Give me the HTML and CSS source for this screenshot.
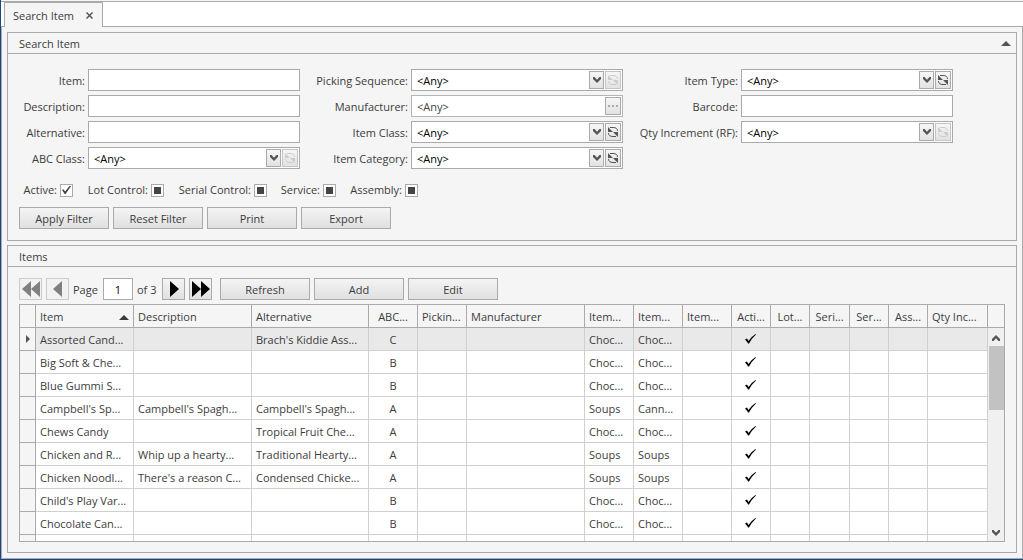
FILE: index.html
```html
<!DOCTYPE html>
<html lang="en">
<head>
<meta charset="utf-8">
<meta name="viewport" content="width=device-width, initial-scale=1">
<title>Search Item</title>
<link rel="stylesheet" href="styles.css">
</head>
<body>
<svg class="defs" aria-hidden="true">
  <symbol id="i-down" viewBox="0 0 8 6"><path d="M0 0h1.500L4 2.800 6.500 0H8v2L4 6 0 2z"/></symbol>
  <symbol id="i-up" viewBox="0 0 8 6"><path d="M0 6h1.500L4 3.200 6.500 6H8V4L4 0 0 4z"/></symbol>
  <symbol id="i-sync" viewBox="0 0 12 12"><path d="M1 1v5h5zM11 11V6H6z"/><path d="M3 1.500h3Q10.500 1.500 10.500 5M9 10.500H6Q1.500 10.500 1.500 7" fill="none" stroke="currentColor"/></symbol>
  <symbol id="i-tick" viewBox="0 0 12 12"><path d="M0 6.500L2 5.500 3.500 8Q6.500 3.500 10.500 1L11 1.500Q7 5 4 10.500H3Q2 8.500 0 6.500z"/></symbol>
  <symbol id="i-tri" viewBox="0 0 10 5"><path d="M0 5L5 0l5 5z"/></symbol>
</svg>
<div class="window">
  <nav class="tabs" role="tablist">
    <div class="tab" role="tab" aria-selected="true">Search Item
      <button class="close" aria-label="Close"><svg width="7" height="7" viewBox="0 0 7 7"><path d="M.5.5l6 6M6.500.5l-6 6" fill="none" stroke="#555" stroke-width="1.500"/></svg></button>
    </div>
  </nav>
  <main class="page">
    <section class="panel">
      <header class="panel-head"><h2>Search Item</h2><button class="collapse" aria-label="Collapse"><svg width="10" height="5"><use href="#i-tri"/></svg></button></header>
      <form class="filters">
        <div class="fields">
          <div class="group">
            <label for="item">Item:</label><input class="box" id="item" type="text">
            <label for="desc">Description:</label><input class="box" id="desc" type="text">
            <label for="alt">Alternative:</label><input class="box" id="alt" type="text">
            <label for="abc">ABC Class:</label><div class="box combo"><select id="abc"><option>&lt;Any&gt;</option></select><span class="mini drop"><svg width="8" height="6"><use href="#i-down"/></svg></span><button type="button" class="mini" disabled aria-label="Reload"><svg width="12" height="12"><use href="#i-sync"/></svg></button></div>
          </div>
          <div class="group second">
            <label for="pick">Picking Sequence:</label><div class="box combo"><select id="pick"><option>&lt;Any&gt;</option></select><span class="mini drop"><svg width="8" height="6"><use href="#i-down"/></svg></span><button type="button" class="mini" disabled aria-label="Reload"><svg width="12" height="12"><use href="#i-sync"/></svg></button></div>
            <label for="manu">Manufacturer:</label><div class="box combo muted"><input id="manu" type="text" value="&lt;Any&gt;" readonly><button type="button" class="mini" disabled aria-label="Browse"><svg width="10" height="2"><path d="M0 0h2v2H0zM4 0h2v2H4zM8 0h2v2H8z"/></svg></button></div>
            <label for="class">Item Class:</label><div class="box combo"><select id="class"><option>&lt;Any&gt;</option></select><span class="mini drop"><svg width="8" height="6"><use href="#i-down"/></svg></span><button type="button" class="mini" aria-label="Reload"><svg width="12" height="12"><use href="#i-sync"/></svg></button></div>
            <label for="cat">Item Category:</label><div class="box combo"><select id="cat"><option>&lt;Any&gt;</option></select><span class="mini drop"><svg width="8" height="6"><use href="#i-down"/></svg></span><button type="button" class="mini" aria-label="Reload"><svg width="12" height="12"><use href="#i-sync"/></svg></button></div>
          </div>
          <div class="group third">
            <label for="type">Item Type:</label><div class="box combo"><select id="type"><option>&lt;Any&gt;</option></select><span class="mini drop"><svg width="8" height="6"><use href="#i-down"/></svg></span><button type="button" class="mini" aria-label="Reload"><svg width="12" height="12"><use href="#i-sync"/></svg></button></div>
            <label for="bar">Barcode:</label><input class="box" id="bar" type="text">
            <label for="qty">Qty Increment (RF):</label><div class="box combo"><select id="qty"><option>&lt;Any&gt;</option></select><span class="mini drop"><svg width="8" height="6"><use href="#i-down"/></svg></span><button type="button" class="mini" disabled aria-label="Reload"><svg width="12" height="12"><use href="#i-sync"/></svg></button></div>
          </div>
        </div>
        <div class="checks">
          <label>Active:<input type="checkbox" class="ticked" checked></label>
          <label>Lot Control:<input type="checkbox" class="mixed"></label>
          <label>Serial Control:<input type="checkbox" class="mixed"></label>
          <label>Service:<input type="checkbox" class="mixed"></label>
          <label>Assembly:<input type="checkbox" class="mixed"></label>
        </div>
        <div class="actions">
          <button type="button" class="btn">Apply Filter</button>
          <button type="button" class="btn">Reset Filter</button>
          <button type="button" class="btn">Print</button>
          <button type="button" class="btn">Export</button>
        </div>
      </form>
    </section>
    <section class="panel items">
      <header class="panel-head"><h2>Items</h2></header>
      <div class="list">
        <div class="pager">
          <button class="nav" disabled aria-label="First page"><svg width="18" height="16" viewBox="0 0 18 16"><path d="M9 0v16L0 8zM18 0v16L9 8z"/></svg></button>
          <button class="nav" disabled aria-label="Previous page"><svg width="18" height="16" viewBox="0 0 18 16"><path d="M13 0v16L4 8z"/></svg></button>
          <label for="pageno">Page</label><input id="pageno" class="pageno" type="text" value="1"><span class="total">of 3</span>
          <button class="nav" aria-label="Next page"><svg width="18" height="16" viewBox="0 0 18 16"><path d="M5 0v16l9-8z"/></svg></button>
          <button class="nav" aria-label="Last page"><svg width="18" height="16" viewBox="0 0 18 16"><path d="M0 0v16l9-8zM9 0v16l9-8z"/></svg></button>
          <div class="actions main-actions">
            <button class="btn">Refresh</button>
            <button class="btn">Add</button>
            <button class="btn">Edit</button>
          </div>
        </div>
        <div class="grid">
          <table>
            <colgroup><col class="w16"><col class="w98"><col class="w118"><col class="w117"><col class="w49"><col class="w49"><col><col class="w49"><col class="w49"><col class="w49"><col class="w39"><col class="w39"><col class="w40"><col class="w39"><col class="w39"><col class="w60"><col class="w16"></colgroup>
            <thead>
              <tr><th></th><th><span class="sorted">Item<svg width="10" height="5"><use href="#i-tri"/></svg></span></th><th>Description</th><th>Alternative</th><th class="mid">ABC...</th><th>Pickin...</th><th>Manufacturer</th><th>Item...</th><th>Item...</th><th>Item...</th><th class="mid">Acti...</th><th class="mid">Lot...</th><th class="mid">Seri...</th><th class="mid">Ser...</th><th class="mid">Ass...</th><th>Qty Inc...</th><th></th></tr>
            </thead>
            <tbody id="rows"></tbody>
          </table>
          <div class="scroll" aria-hidden="true"><svg width="8" height="6"><use href="#i-up"/></svg><div class="thumb"></div><svg class="end" width="8" height="6"><use href="#i-down"/></svg></div>
        </div>
      </div>
    </section>
  </main>
</div>
<script src="rows.js"></script>
</body>
</html>
```
FILE: rows.js
```js
const items = [
  ["Assorted Cand...", "", "Brach's Kiddie Ass...", "C", "Choc...", "Choc..."],
  ["Big Soft & Che...", "", "", "B", "Choc...", "Choc..."],
  ["Blue Gummi S...", "", "", "B", "Choc...", "Choc..."],
  ["Campbell's Sp...", "Campbell's Spagh...", "Campbell's Spagh...", "A", "Soups", "Cann..."],
  ["Chews Candy", "", "Tropical Fruit Che...", "A", "Choc...", "Choc..."],
  ["Chicken and R...", "Whip up a hearty...", "Traditional Hearty...", "A", "Soups", "Soups"],
  ["Chicken Noodl...", "There's a reason C...", "Condensed Chicke...", "A", "Soups", "Soups"],
  ["Child's Play Var...", "", "", "B", "Choc...", "Choc..."],
  ["Chocolate Can...", "", "", "B", "Choc...", "Choc..."],
  null
];
const tick = '<svg width="12" height="12" role="img" aria-label="Yes"><use href="#i-tick"/></svg>';
const body = document.getElementById("rows");
items.forEach((item, index) => {
  const row = body.insertRow();
  const add = (html, cls) => {
    const cell = row.insertCell();
    cell.innerHTML = html;
    if (cls) cell.className = cls;
  };
  const [name, description, alternative, abc, group, category] = item || ["", "", "", "", "", ""];
  if (index === 0) row.className = "selected";
  add(index === 0 ? '<svg width="4" height="8"><path d="M0 0v8l4-4z"/></svg>' : "", "handle");
  add(name.replace("&", "&amp;"));
  add(description);
  add(alternative);
  add(abc, "mid");
  add("");
  add("");
  add(group);
  add(category);
  add("");
  add(item ? tick : "", "tick");
  for (let i = 0; i < 6; i++) add("");
});
```
FILE: styles.css
```css
* { box-sizing: border-box; }
body {
  margin: 0;
  color: #3c3c3c;
  background: #f5f5f5;
  font: 11px/16px "Open Sans", "Noto Sans", sans-serif;
}
button, input, select { font: inherit; color: inherit; border-radius: 0; margin: 0; }
svg { display: block; fill: currentColor; flex: none; }
h2 { margin: 0; font: inherit; }
.defs { position: absolute; width: 0; height: 0; }

.window {
  display: flex;
  flex-direction: column;
  height: 100vh;
  border-left: 1px solid #1c4587;
  border-bottom: 1px solid #1c4587;
}
.tabs {
  display: flex;
  flex: none;
  height: 26px;
  margin-top: 1px;
  padding-left: 3px;
  background: #fff;
  border-top: 1px solid #aaa;
  border-bottom: 1px solid #aaa;
}
.tab {
  display: flex;
  align-items: center;
  justify-content: space-between;
  width: 99px;
  height: 25px;
  padding: 1px 9px 0 8px;
  background: #f5f5f5;
  border: 1px solid #aaa;
  border-width: 1px 1px 0;
}
.close, .collapse { padding: 0; border: 0; background: none; color: #555; }
.page {
  display: flex;
  flex: 1;
  flex-direction: column;
  gap: 4px;
  min-height: 0;
  padding: 5px;
  border: 1px solid #aaa;
  border-top: 0;
}
.panel { flex: none; border: 1px solid #aaa; }
.panel-head {
  display: flex;
  align-items: center;
  justify-content: space-between;
  height: 21px;
  padding: 1px 5px 0 11px;
  border-bottom: 1px solid #aaa;
}
.filters { padding: 15px 11px 11px; }
.fields { display: flex; }
.group {
  display: grid;
  grid-template-columns: 66px 212px;
  grid-auto-rows: 22px;
  align-content: start;
  align-items: center;
  gap: 4px 3px;
}
.second { grid-template-columns: 108px 212px; }
.third { grid-template-columns: 115px 212px; }
.group label { padding-top: 2px; text-align: right; white-space: nowrap; }
.box {
  width: 100%;
  height: 22px;
  padding: 0 5px;
  background: #fff;
  border: 1px solid #aaa;
}
.combo { display: flex; align-items: center; gap: 1px; padding: 1px; color: #000; }
.combo select, .combo input {
  flex: 1;
  min-width: 0;
  height: 18px;
  padding: 1px 0 0 4px;
  border: 0;
  background: none;
  appearance: none;
}
.muted { color: #444; border-color: #b5b5b5; }
.mini {
  display: grid;
  place-items: center;
  width: 16px;
  height: 18px;
  padding: 0;
  color: #555;
  background: linear-gradient(#f6f6f6, #e2e2e2);
  border: 1px solid #aaa;
}
.drop { width: 15px; pointer-events: none; }
.mini:disabled { color: #ccc; border-color: #c4c4c4; }
.muted .mini:disabled { color: #aaa; border-color: #aaa; }

.checks {
  display: grid;
  grid-template-columns: 54px 91px 103px 69px 82px;
  padding-top: 13px;
}
.checks label { display: flex; align-items: center; justify-content: flex-end; gap: 3px; white-space: nowrap; }
.checks input {
  appearance: none;
  width: 13px;
  height: 13px;
  background: #fff;
  border: 1px solid #aaa;
}
.ticked::before {
  content: "";
  display: block;
  width: 9px;
  height: 9px;
  margin: 1px;
  background: #444;
  clip-path: polygon(0 50%, 15% 42%, 35% 68%, 88% 0, 100% 8%, 40% 95%, 30% 95%);
}
.mixed { padding: 2px; }
.mixed::before { content: ""; display: block; width: 7px; height: 7px; background: #444; }
.actions { display: flex; gap: 4px; padding-top: 9px; }
.btn {
  width: 90px;
  height: 22px;
  padding: 1px 0 0;
  background: linear-gradient(#f4f4f4, #e0e0e0);
  border: 1px solid #aaa;
}

.items { display: flex; flex: 1; flex-direction: column; min-height: 0; }
.list { display: flex; flex: 1; flex-direction: column; gap: 4px; min-height: 0; padding: 11px 11px 10px; }
.pager { display: flex; align-items: center; gap: 4px; height: 22px; }
.pager label { width: 26px; padding-top: 1px; }
.total { width: 21px; padding-top: 1px; white-space: nowrap; }
.nav {
  display: grid;
  place-items: center;
  width: 23px;
  height: 22px;
  padding: 0;
  color: #000;
  background: linear-gradient(#f4f4f4, #e0e0e0);
  border: 1px solid #aaa;
}
.nav:disabled { color: #808080; background: #f2f2f2; border-color: #ccc; }
.pageno {
  width: 30px;
  height: 22px;
  padding: 0;
  text-align: center;
  color: #000;
  background: #fff;
  border: 1px solid #aaa;
}
.main-actions { padding: 0 0 0 4px; }

.grid { position: relative; flex: 1; min-height: 0; overflow: hidden; border: 1px solid #aaa; background: #fff; }
table { width: 100%; table-layout: fixed; border-spacing: 0; }
.w16 { width: 16px; }
.w39 { width: 39px; }
.w40 { width: 40px; }
.w49 { width: 49px; }
.w60 { width: 60px; }
.w98 { width: 98px; }
.w117 { width: 117px; }
.w118 { width: 118px; }
th, td {
  height: 23px;
  padding: 2px 0 0 4px;
  overflow: hidden;
  text-align: left;
  font-weight: normal;
  line-height: 16px;
  white-space: nowrap;
  border-right: 1px solid #d0d0d0;
  border-bottom: 1px solid #d0d0d0;
}
th { background: #f5f5f5; border-color: #aaa; }
th:last-child { border-right: 0; }
.mid { padding-left: 0; text-align: center; }
.handle { padding: 0 0 0 6px; color: #555; background: #f5f5f5; border-color: #aaa; }
.selected td:not(.handle) { background: #e9e9e9; }
.sorted { display: flex; align-items: center; justify-content: space-between; padding-right: 4px; }
.tick { padding: 0; color: #000; }
.tick svg { margin: 0 auto; }
.scroll {
  position: absolute;
  inset: 23px 0 0 auto;
  display: flex;
  flex-direction: column;
  align-items: center;
  gap: 5px;
  width: 16px;
  padding: 7px 0 5px;
  background: #f0f0f0;
  color: #555;
}
.thumb { width: 15px; height: 64px; background: #c2c2c2; }
.end { margin-top: auto; }
```
